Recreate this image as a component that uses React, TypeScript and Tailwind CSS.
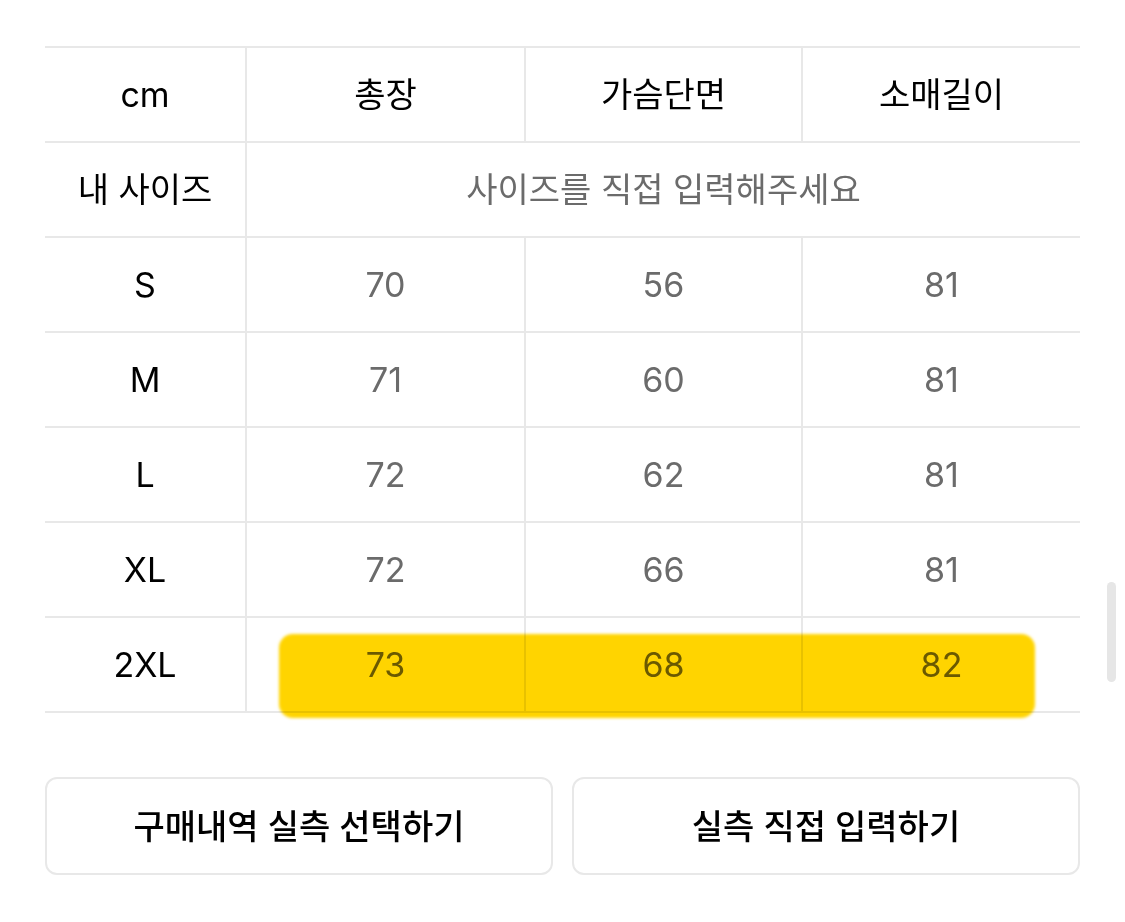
const rows = [
  { size: 'S', values: ['70', '56', '81'] },
  { size: 'M', values: ['71', '60', '81'] },
  { size: 'L', values: ['72', '62', '81'] },
  { size: 'XL', values: ['72', '66', '81'] },
  { size: '2XL', values: ['73', '68', '82'] },
];

const headers = ['총장', '가슴단면', '소매길이'];

const cell = 'h-[95px] flex items-center justify-center border-b-2 border-[#e8e8e8]';

const App = () => {
  return (
    <div
      className="relative min-h-[922px] w-[1125px] bg-white pl-[45px] pr-[45px] pt-[46px] text-[34px] text-black"
      style={{ fontFamily: 'Inter, "Noto Sans CJK KR", sans-serif' }}
    >
      {/* Size table */}
      <div className="relative border-t-2 border-[#e8e8e8]">
        <div className="grid grid-cols-[202px_279px_277px_277px]">
          {/* header */}
          <div className={`${cell} border-r-2`}>cm</div>
          {headers.map((h, i) => (
            <div key={h} className={`${cell} ${i < 2 ? 'border-r-2' : ''}`}>
              {h}
            </div>
          ))}

          {/* my size */}
          <div className={`${cell} border-r-2`}>내 사이즈</div>
          <div className={`${cell} col-span-3 text-[#6b6b6b]`}>사이즈를 직접 입력해주세요</div>

          {rows.map((row) => (
            <div key={row.size} className="contents">
              <div className={`${cell} border-r-2`}>{row.size}</div>
              {row.values.map((v, i) => (
                <div key={i} className={`${cell} ${i < 2 ? 'border-r-2' : ''} text-[#6b6b6b]`}>
                  {v}
                </div>
              ))}
            </div>
          ))}
        </div>

        {/* highlighter mark over the 2XL row */}
        <div className="pointer-events-none absolute left-[234px] top-[586px] h-[84px] w-[756px] rounded-[14px] bg-[#ffd400] mix-blend-multiply blur-[1.5px]" />
      </div>

      {/* Buttons */}
      <div className="mt-[64px] grid grid-cols-2 gap-[19px]">
        <button className="flex h-[98px] items-center justify-center rounded-xl border-2 border-[#e8e8e8] bg-white font-medium">
          구매내역 실측 선택하기
        </button>
        <button className="flex h-[98px] items-center justify-center rounded-xl border-2 border-[#e8e8e8] bg-white font-medium">
          실측 직접 입력하기
        </button>
      </div>

      {/* scroll indicator */}
      <div className="absolute left-[1107px] top-[582px] h-[100px] w-[9px] rounded-full bg-[#e6e6e6]" />
    </div>
  );
};

export default App;
